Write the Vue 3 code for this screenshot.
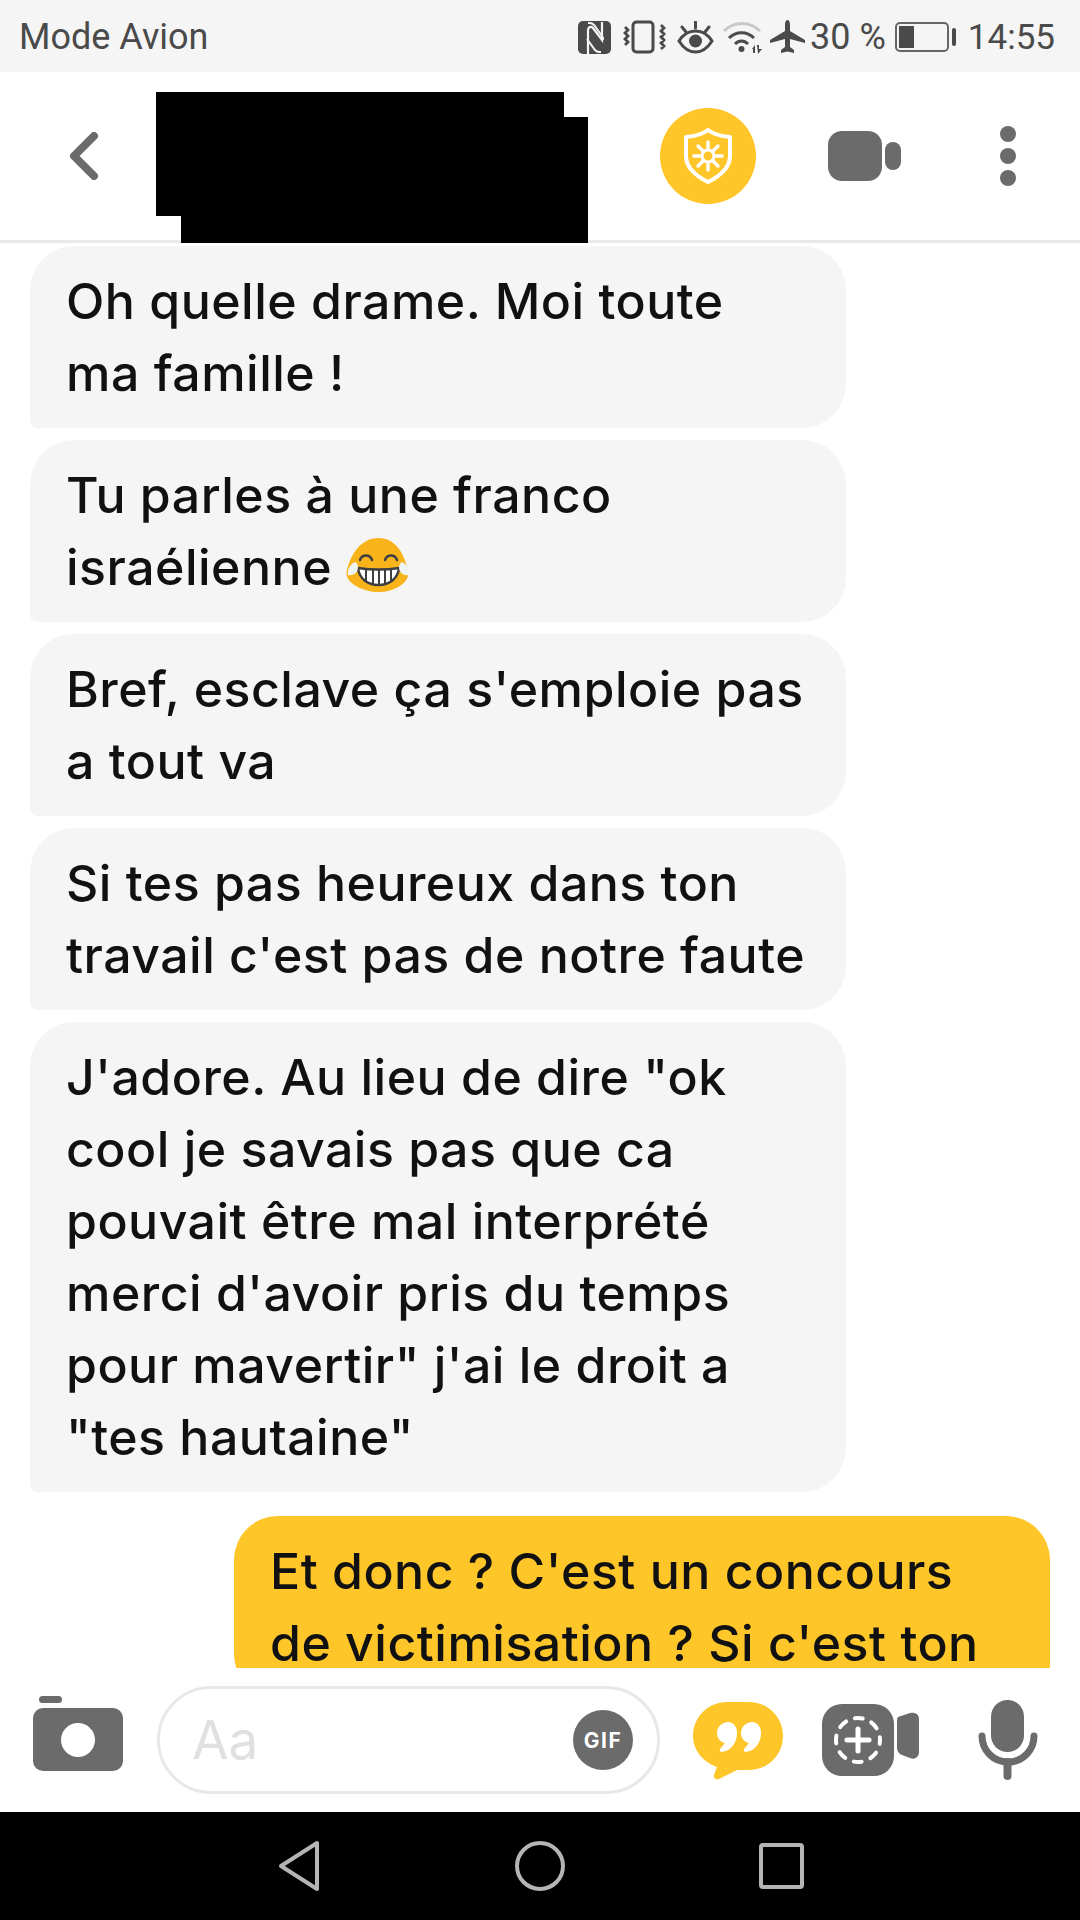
<template>
  <div class="phone">
    <div class="status-bar">
      <span class="carrier">Mode Avion</span>
      <div class="status-right">
        <svg class="ic-nfc" width="33" height="33" viewBox="0 0 33 33">
          <rect width="33" height="33" rx="5" fill="#4a4a4a" />
          <path d="M10 33V9c0-3 3-4 5-2l9 12V1" fill="none" stroke="#f5f5f5" stroke-width="2.200" />
          <path d="M10 2h2c2 0 3 1 4 2l8 11c2 3 1 4-1 4M23 31h-2c-2 0-3-1-4-2L9 18" fill="none" stroke="#f5f5f5" stroke-width="2" />
        </svg>
        <svg class="ic-vib" width="44" height="34" viewBox="0 0 44 34">
          <rect x="11" y="2" width="20" height="30" rx="3.500" fill="none" stroke="#4a4a4a" stroke-width="3" />
          <path d="M3 7l3 3-3 3 3 3-3 3 3 3-3 3M39 5l3 3-3 3 3 3-3 3 3 3-3 3 3 3-3 3" fill="none" stroke="#4a4a4a" stroke-width="2.800" />
        </svg>
        <svg class="ic-eye" width="37" height="33" viewBox="0 0 37 33">
          <path d="M2 20C7 12 12 10 18.500 10S30 12 35 20C30 28 25 31 18.500 31S7 28 2 20Z" fill="none" stroke="#4a4a4a" stroke-width="3" />
          <circle cx="18.500" cy="20" r="6.500" fill="#4a4a4a" />
          <path d="M18.500 1v6M5 6l4 5M32 6l-4 5" stroke="#4a4a4a" stroke-width="3" stroke-linecap="round" />
        </svg>
        <svg class="ic-wifi" width="41" height="34" viewBox="0 0 41 34">
          <path d="M2 11C12 1 28 1 38 11" fill="none" stroke="#c8c8c8" stroke-width="3" />
          <path d="M7 18C14 11 25 11 32 18M13 24c4-4 9-4 13 0" fill="none" stroke="#4a4a4a" stroke-width="3" />
          <circle cx="19.500" cy="29" r="3" fill="#4a4a4a" />
          <path d="M30 29l3-4v8h-2v-4zM35 25h2v4h3l-4 5z" fill="#4a4a4a" />
        </svg>
        <svg class="ic-plane" width="35" height="34" viewBox="0 0 35 34">
          <path d="M17.500 0c2 0 2.500 3 2.500 5v6l15 9v3l-15-4v8l4 3v3l-6.500-1.500L11 33v-3l4-3v-8L0 23v-3l15-9V5c0-2 .5-5 2.500-5Z" fill="#4a4a4a" />
        </svg>
        <span class="battery-text">30 %</span>
        <svg class="ic-batt" width="62" height="30" viewBox="0 0 62 30">
          <rect x="1" y="1" width="52" height="28" rx="4" fill="none" stroke="#666" stroke-width="2" />
          <rect x="4" y="4" width="15" height="22" fill="#4a4a4a" />
          <rect x="57" y="6" width="4" height="18" rx="2" fill="#4a4a4a" />
        </svg>
        <span class="time">14:55</span>
      </div>
    </div>

    <header class="top-bar">
      <svg class="back" width="32" height="48" viewBox="0 0 32 48">
        <path d="M26 4L6 24l20 20" fill="none" stroke="#6b6b6b" stroke-width="8" stroke-linecap="round" stroke-linejoin="round" />
      </svg>
      <div class="shield">
        <svg width="50" height="58" viewBox="0 0 50 58">
          <path d="M25 3c5 4 11 6 22 7v19c0 11-10 20-22 26C13 49 3 40 3 29V10c11-1 17-3 22-7Z" fill="none" stroke="#fff" stroke-width="4" stroke-linejoin="round" />
          <circle cx="25" cy="29" r="6" fill="none" stroke="#fff" stroke-width="3" />
          <path d="M25 15v6M25 37v6M11 29h6M33 29h6M15 19l4.500 4.500M30.500 34.500L35 39M35 19l-4.500 4.500M19.500 34.500L15 39" stroke="#fff" stroke-width="3.400" stroke-linecap="round" />
        </svg>
      </div>
      <svg class="cam" width="73" height="50" viewBox="0 0 73 50">
        <rect width="54" height="50" rx="14" fill="#6b6b6b" />
        <rect x="57" y="11" width="16" height="28" rx="8" fill="#6b6b6b" />
      </svg>
      <div class="dots"><i></i><i></i><i></i></div>
      <div class="redact"></div>
    </header>

    <main class="messages">
      <div v-for="(m, i) in messages" :key="i" class="bubble" :class="{ mine: m.mine }">
        <div v-for="(line, j) in m.lines" :key="j" class="line">
          {{ line }}
          <svg v-if="m.emoji && j === 1" class="emoji" width="65" height="54" viewBox="0 0 65 54">
            <path d="M32.500 0C50 0 58 16 62 32c3 12-13 22-29.500 22S-3 44 1 32C5 16 15 0 32.500 0Z" fill="#f9b41c" />
            <path d="M14 22c2-6 10-6 12 0M39 22c2-6 10-6 12 0" fill="none" stroke="#3f3f3f" stroke-width="2.500" stroke-linecap="round" />
            <path d="M12 30c13 2 28 2 41 0-1 10-9 17-20.500 17S13 40 12 30Z" fill="#fff" stroke="#3f3f3f" stroke-width="2.500" />
            <path d="M20 31v13M27 32v14M33 32v15M39 32v14M45 31v13" stroke="#3f3f3f" stroke-width="2" />
            <path d="M9 24c-5 2-8 8-7 13 5 1 10-2 10-8 0-2-1-4-3-5ZM56 24c5 2 8 8 7 13-5 1-10-2-10-8 0-2 1-4 3-5Z" fill="#eef3f6" />
          </svg>
        </div>
      </div>
    </main>

    <footer class="composer">
      <svg class="photo" width="90" height="75" viewBox="0 0 90 75">
        <rect x="6" y="0" width="23" height="7" rx="3.500" fill="#6b6b6b" />
        <rect x="0" y="12" width="90" height="63" rx="10" fill="#6b6b6b" />
        <circle cx="45" cy="44" r="17" fill="#fff" />
      </svg>
      <div class="input-pill">
        <span class="placeholder">Aa</span>
        <span class="gif">GIF</span>
      </div>
      <svg class="quote" width="90" height="78" viewBox="0 0 90 78">
        <path d="M34 0h22c19 0 34 15 34 34S75 68 56 68H44L26 77c-3 1-6-1-5-4l3-8C10 60 0 48 0 34 0 15 15 0 34 0Z" fill="#ffc629" />
        <path d="M35 20c6 0 9 5 9 11 0 11-7 18-15 19-2 0-3-2-2-3l5-6c-5-1-8-5-8-10 0-6 5-11 11-11ZM59 20c6 0 9 5 9 11 0 11-7 18-15 19-2 0-3-2-2-3l5-6c-5-1-8-5-8-10 0-6 5-11 11-11Z" fill="#fff" />
      </svg>
      <svg class="story" width="97" height="72" viewBox="0 0 97 72">
        <rect width="72" height="72" rx="20" fill="#6b6b6b" />
        <path d="M76 13l12-4c5-1 9 1 9 6v33c0 5-4 8-9 6l-8-3c-3-1-5-4-5-7V18c0-2 0-4 1-5Z" fill="#6b6b6b" />
        <circle cx="36" cy="36" r="22" fill="none" stroke="#fff" stroke-width="4" stroke-linecap="round" stroke-dasharray="8 9.300" stroke-dashoffset="4" />
        <path d="M36 25v22M25 36h22" stroke="#fff" stroke-width="5" stroke-linecap="round" />
      </svg>
      <svg class="mic" width="60" height="80" viewBox="0 0 60 80">
        <rect x="13" y="0" width="33" height="52" rx="16.500" fill="#6b6b6b" />
        <path d="M4 36c0 14 11 26 26 26s26-12 26-26" fill="none" stroke="#6b6b6b" stroke-width="7" stroke-linecap="round" />
        <path d="M29.500 62v14" stroke="#6b6b6b" stroke-width="8" stroke-linecap="round" />
      </svg>
    </footer>

    <nav class="nav-bar">
      <svg width="42" height="52" viewBox="0 0 42 52">
        <path d="M39 3v46L3 26Z" fill="none" stroke="#b5b5b5" stroke-width="4" stroke-linejoin="round" />
      </svg>
      <svg width="50" height="52" viewBox="0 0 50 52">
        <circle cx="25" cy="26" r="23" fill="none" stroke="#b5b5b5" stroke-width="4" />
      </svg>
      <svg width="46" height="48" viewBox="0 0 46 48">
        <rect x="2" y="3" width="41" height="42" rx="2" fill="none" stroke="#b5b5b5" stroke-width="4" />
      </svg>
    </nav>
  </div>
</template>

<script setup>
const messages = [
  { lines: ['Oh quelle drame. Moi toute', 'ma famille !'] },
  { lines: ['Tu parles à une franco', 'israélienne'], emoji: true },
  { lines: ["Bref, esclave ça s'emploie pas", 'a tout va'] },
  { lines: ['Si tes pas heureux dans ton', "travail c'est pas de notre faute"] },
  {
    lines: [
      'J\'adore. Au lieu de dire "ok',
      'cool je savais pas que ca',
      'pouvait être mal interprété',
      "merci d'avoir pris du temps",
      'pour mavertir" j\'ai le droit a',
      '"tes hautaine"',
    ],
  },
  { lines: ['Et donc ? C\'est un concours', "de victimisation ? Si c'est ton"], mine: true },
]
</script>

<style>
html, body { margin: 0; background: #fff; }
</style>

<style scoped>
.phone { width: 1080px; height: 1920px; display: flex; flex-direction: column; overflow: hidden; background: #fff; font-family: Inter, "Liberation Sans", sans-serif; }

.status-bar { height: 72px; flex: none; box-sizing: border-box; display: flex; align-items: center; justify-content: space-between; padding: 2px 25px 0 19px; background: #f5f5f5; color: #4a4a4a; font-family: Roboto, sans-serif; font-size: 36px; }
.status-right { display: flex; align-items: center; }
.ic-vib { margin-left: 11px; }
.ic-eye { margin-left: 11px; }
.ic-wifi { margin-left: 8px; }
.ic-plane { margin-left: 7px; }
.battery-text { margin-left: 5px; }
.ic-batt { margin-left: 9px; }
.time { margin-left: 11px; font-size: 35px; }

.top-bar { position: relative; height: 171px; flex: none; display: flex; align-items: center; box-sizing: border-box; border-bottom: 3px solid #e9e9e9; padding-left: 68px; }
.shield { width: 96px; height: 96px; margin-left: 560px; border-radius: 50%; background: #ffc629; display: flex; align-items: center; justify-content: center; }
.cam { margin-left: 72px; }
.dots { margin-left: 99px; display: flex; flex-direction: column; gap: 6px; }
.dots i { display: block; width: 16px; height: 16px; border-radius: 50%; background: #6b6b6b; }
.redact { position: absolute; left: 156px; top: 20px; width: 432px; height: 151px; background: #000; clip-path: polygon(0 0, 408px 0, 408px 25px, 100% 25px, 100% 100%, 25px 100%, 25px 124px, 0 124px); }

.messages { flex: 1; min-height: 0; overflow: hidden; display: flex; flex-direction: column; gap: 12px; padding: 3px 30px 0; }
.bubble { flex: none; box-sizing: border-box; width: 816px; padding: 19px 10px 19px 36px; background: #f5f5f5; border-radius: 44px 44px 44px 8px; color: #111; font-size: 50px; font-weight: 450; line-height: 72px; letter-spacing: 0.5px; }
.bubble.mine { margin-top: 12px; align-self: flex-end; background: #ffc629; border-radius: 44px 44px 8px 44px; }
.line { white-space: nowrap; }
.emoji { vertical-align: -7px; }

.composer { height: 144px; flex: none; display: flex; align-items: center; padding-left: 33px; box-sizing: border-box; }
.photo { margin-bottom: 13px; }
.input-pill { width: 503px; height: 108px; margin-left: 34px; box-sizing: border-box; border: 3px solid #e8e8e8; border-radius: 54px; display: flex; align-items: center; justify-content: space-between; padding: 0 24px 0 32px; }
.placeholder { font-size: 53px; color: #e0e0e0; }
.gif { width: 60px; height: 60px; border-radius: 50%; background: #6b6b6b; color: #fff; font-size: 21px; font-weight: 700; letter-spacing: 1.500px; display: flex; align-items: center; justify-content: center; }
.quote { margin-left: 33px; margin-top: 2px; }
.story { margin-left: 39px; }
.mic { margin-left: 59px; }

.nav-bar { height: 108px; flex: none; background: #000; display: flex; align-items: center; }
.nav-bar svg:nth-child(1) { margin-left: 278px; }
.nav-bar svg:nth-child(2) { margin-left: 195px; }
.nav-bar svg:nth-child(3) { margin-left: 194px; }
</style>
